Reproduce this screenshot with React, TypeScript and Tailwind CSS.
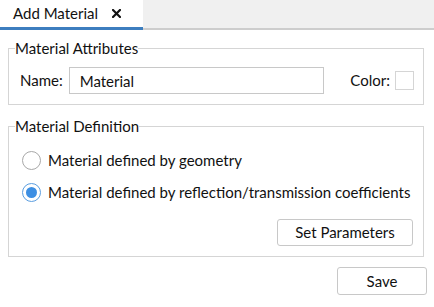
import { useState } from "react";

const font = { fontFamily: '"Lato", "Liberation Sans", sans-serif' };

function CloseIcon() {
  return (
    <svg width="9" height="9" viewBox="0 0 9 9" className="ml-[14px]">
      <path d="M1 1 L8 8 M8 1 L1 8" stroke="#111" strokeWidth="2.2" strokeLinecap="square" />
    </svg>
  );
}

function Radio({ checked, label, onClick }: { checked: boolean; label: string; onClick(): void }) {
  return (
    <label className="flex items-center h-[24px] cursor-pointer" onClick={onClick}>
      <span
        className={
          checked
            ? "w-[19px] h-[19px] rounded-full border border-[#5b9ee0] bg-white flex items-center justify-center"
            : "w-[19px] h-[19px] rounded-full border border-[#a8a8a8] bg-white"
        }
      >
        {checked && <span className="w-[11px] h-[11px] rounded-full bg-[#3d8fe3]" />}
      </span>
      <span className="ml-[7px]">{label}</span>
    </label>
  );
}

export default function App() {
  const [mode, setMode] = useState("coeff");
  const [name, setName] = useState("Material");

  return (
    <div className="w-[434px] h-[307px] bg-white text-[15px] text-[#111]" style={font}>
      <div className="flex h-[30px]">
        <div className="w-[143px] h-full bg-white border-b-[3px] border-[#3d7ebf] flex items-center pl-[13px]">
          Add Material
          <CloseIcon />
        </div>
        <div className="flex-1 bg-[#f0f0f0] border-b-2 border-[#cdcdcd]" />
      </div>

      <div className="pl-[8px] pr-[10px] pt-[8px]">
        <fieldset className="border border-[#d5d5d5] pl-[11px] pr-[9px] pt-[9px] pb-[10px]">
          <legend className="-ml-[5px] leading-[20px]">Material Attributes</legend>
          <div className="flex items-center">
            <span>Name:</span>
            <input
              value={name}
              onChange={(e) => setName(e.target.value)}
              className="ml-[6px] w-[255px] h-[27px] border border-[#c8c8c8] px-[10px] outline-none"
            />
            <span className="ml-auto">Color:</span>
            <span className="ml-[5px] w-[19px] h-[19px] border border-[#d5d5d5] bg-white" />
          </div>
        </fieldset>

        <fieldset className="mt-[11px] border border-[#d5d5d5] pl-[13px] pr-[10px] pt-[12px] pb-[10px]">
          <legend className="-ml-[7px] leading-[20px]">Material Definition</legend>
          <div className="flex flex-col gap-[8px]">
            <Radio checked={mode === "geom"} label="Material defined by geometry" onClick={() => setMode("geom")} />
            <Radio
              checked={mode === "coeff"}
              label="Material defined by reflection/transmission coefficients"
              onClick={() => setMode("coeff")}
            />
          </div>
          <div className="flex justify-end mt-[15px]">
            <button className="w-[136px] h-[27px] rounded-[3px] border border-[#c8c8c8] bg-white">
              Set Parameters
            </button>
          </div>
        </fieldset>
      </div>

      <div className="flex justify-end pr-[7px] mt-[10px]">
        <button className="w-[90px] h-[28px] rounded-[3px] border border-[#c8c8c8] bg-white">Save</button>
      </div>
    </div>
  );
}
